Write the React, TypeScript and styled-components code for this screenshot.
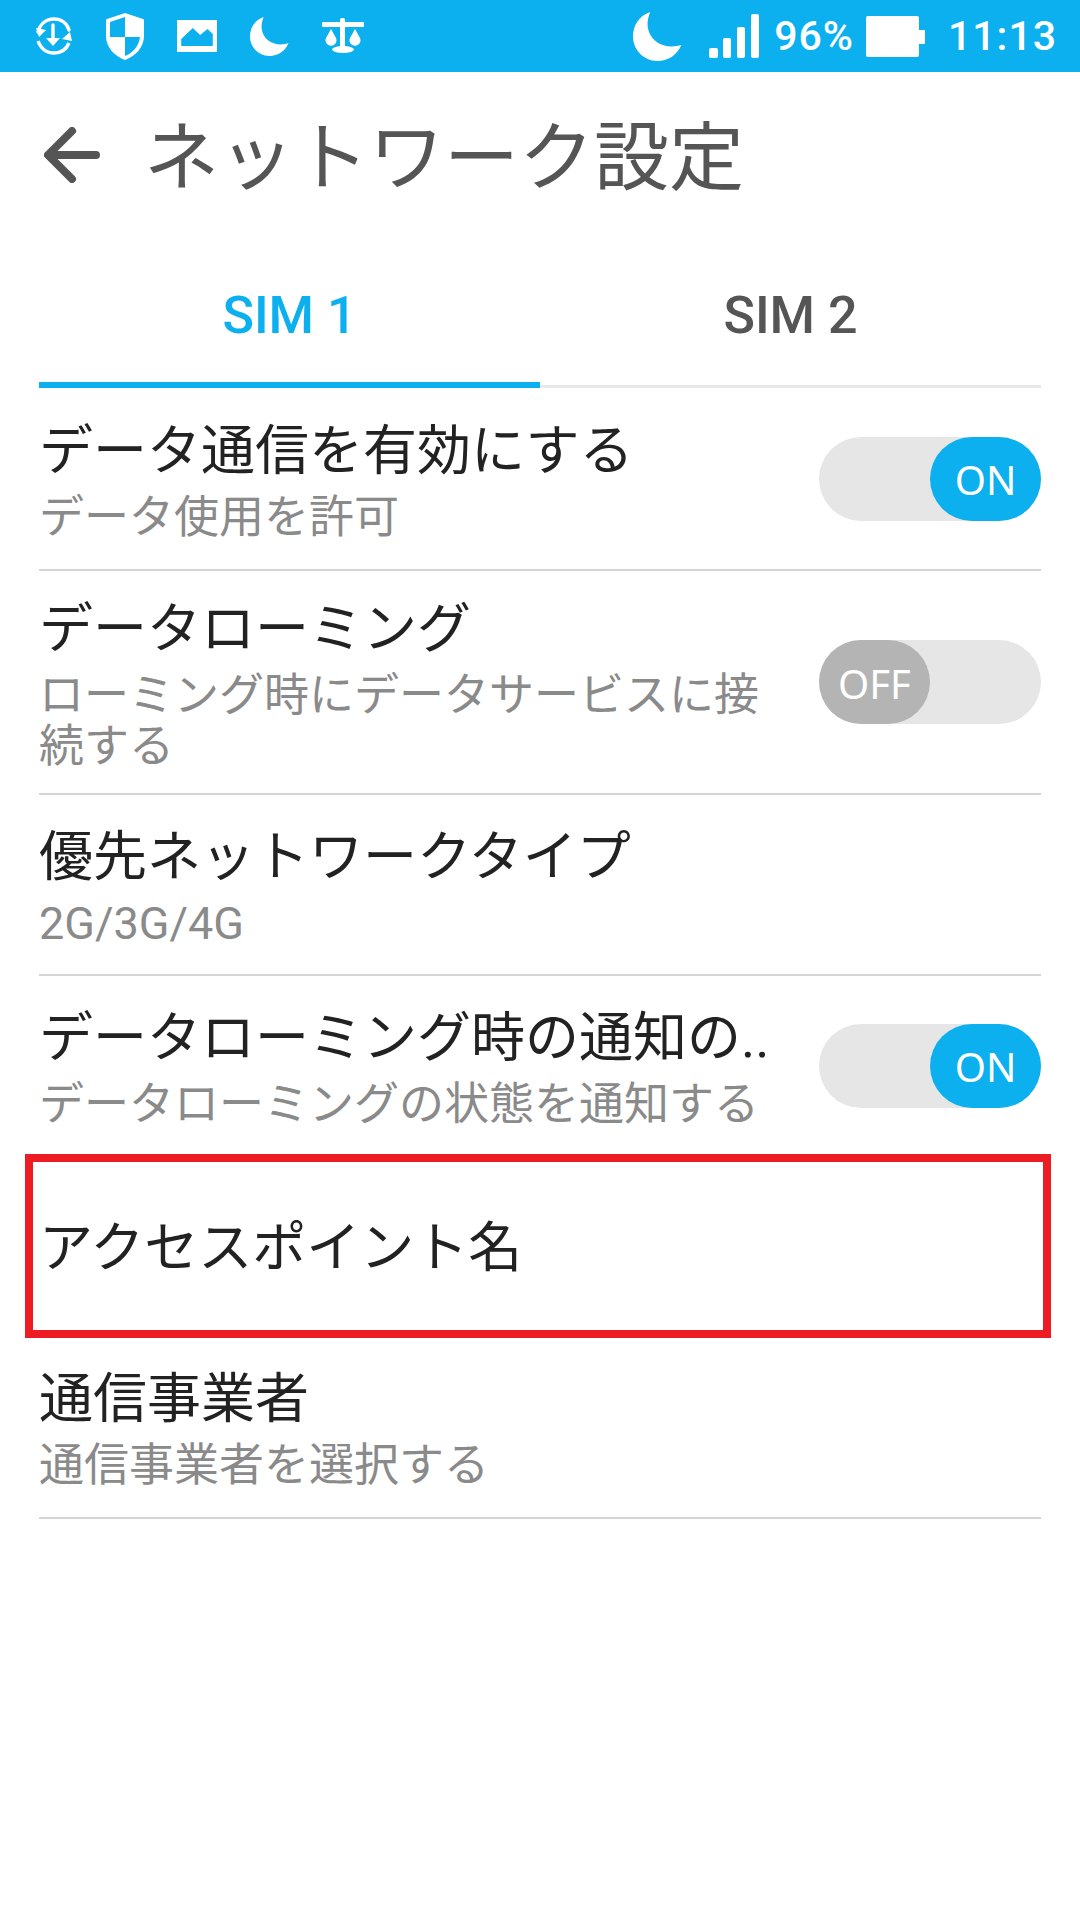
import React from "react";
import styled, { createGlobalStyle } from "styled-components";

const Global = createGlobalStyle`
  html, body { margin: 0; padding: 0; background: #fff; }
  body { width: 1080px; height: 1920px; overflow: hidden; font-family: "Roboto", "Noto Sans CJK JP", sans-serif; }
`;

const BLUE = "#0cb0ef";

const Page = styled.div`
  width: 1080px;
  height: 1920px;
  background: #fff;
`;
const StatusBar = styled.div`
  height: 72px;
  background: ${BLUE};
  display: flex;
  align-items: center;
  justify-content: space-between;
  padding: 0 23px 0 35px;
  box-sizing: border-box;
`;
const StatusGroup = styled.div`
  display: flex;
  align-items: center;
`;
const StatusIcons = styled(StatusGroup)`
  gap: 33px;
`;
const StatusText = styled.span<{ $gap: number }>`
  color: #fff;
  font-size: 41px;
  font-weight: 500;
  letter-spacing: 1px;
  margin-left: ${(p) => p.$gap}px;
`;
const Gap = styled.span<{ $gap: number }>`
  display: flex;
  margin-left: ${(p) => p.$gap}px;
`;
const Header = styled.div`
  height: 138px;
  display: flex;
  align-items: center;
  padding: 20px 0 0 44px;
  box-sizing: border-box;
`;
const BackIcon = styled.svg`
  margin-top: 8px;
`;
const Title = styled.h1`
  margin: 0 0 0 44px;
  font-size: 75px;
  font-weight: 400;
  color: #555;
  font-family: "Noto Sans CJK JP", sans-serif;
  line-height: 1;
`;
const Content = styled.div`
  padding: 0 39px;
`;
const Tabs = styled.div`
  display: flex;
  height: 178px;
  border-bottom: 3px solid #e8e8e8;
  box-sizing: border-box;
`;
const Tab = styled.div<{ $active?: boolean }>`
  flex: 1;
  display: flex;
  align-items: center;
  justify-content: center;
  font-size: 52px;
  font-weight: 500;
  padding-top: 38px;
  color: ${(p) => (p.$active ? BLUE : "#555")};
  border-bottom: 6px solid ${(p) => (p.$active ? BLUE : "transparent")};
  margin-bottom: -3px;
`;
const Row = styled.div<{ $height: number; $plain?: boolean }>`
  position: relative;
  height: ${(p) => p.$height}px;
  box-sizing: border-box;
  display: flex;
  align-items: center;
  justify-content: space-between;
  border-bottom: ${(p) => (p.$plain ? "none" : "2px solid #d4d4d4")};
`;
const RowText = styled.div`
  width: 745px;
  padding-top: 6px;
  font-family: "Roboto", "Noto Sans CJK JP", sans-serif;
`;
const RowTitle = styled.div`
  font-size: 54px;
  line-height: 62px;
  color: #222;
  white-space: nowrap;
`;
const RowSub = styled.div`
  font-size: 45px;
  line-height: 51px;
  color: #8a8a8a;
  margin-top: 9px;
`;
const Track = styled.div<{ $on: boolean }>`
  width: 222px;
  height: 84px;
  border-radius: 42px;
  background: #e6e6e6;
  display: flex;
  justify-content: ${(p) => (p.$on ? "flex-end" : "flex-start")};
`;
const Thumb = styled.div<{ $on: boolean }>`
  width: 111px;
  height: 84px;
  box-sizing: border-box;
  padding-top: 2px;
  border-radius: 42px;
  background: ${(p) => (p.$on ? BLUE : "#b4b4b4")};
  color: #fff;
  font-size: 40px;
  font-family: "Noto Sans", sans-serif;
  display: flex;
  align-items: center;
  justify-content: center;
`;
const Highlight = styled.div`
  position: absolute;
  left: -14px;
  right: -10px;
  top: -1px;
  bottom: -1px;
  border: 8px solid #ed1c24;
`;

const Toggle = ({ on }: { on: boolean }) => (
  <Track $on={on}>
    <Thumb $on={on}>{on ? "ON" : "OFF"}</Thumb>
  </Track>
);

const Moon = ({ size }: { size: number }) => (
  <svg width={size} height={size} viewBox="0 0 40 40">
    <path d="M14 0C5 3 0 11 0 20c0 11 9 20 20 20 9 0 16-5 19.500-13-14 4-26-3-27.500-15-.5-4 .5-8 2-12z" fill="#fff" />
  </svg>
);

export default function App() {
  return (
    <Page>
      <Global />
      <StatusBar>
        <StatusIcons>
          <svg width="38" height="38" viewBox="0 0 38 38" fill="none" stroke="#fff" strokeWidth="3.4">
            <path d="M3 15C5 7 11 2 19 2c7 0 13 4 15 11" strokeLinecap="round" />
            <path d="M3 24c3 8 9 12 16 12 6 0 12-3 15-10" />
            <path d="M18 8v15" strokeLinecap="round" />
            <path d="M11 21h14l-7 8z" fill="#fff" stroke="none" />
            <path d="M1 11l10 2-7 7zM37 24l-10-2 8-7z" fill="#fff" stroke="none" />
          </svg>
          <svg width="38" height="47" viewBox="0 0 38 47">
            <path fillRule="evenodd" fill="#fff" d="M19 0l18 6c1 0 1 1 1 2v15c0 11-8 20-19 24C8 43 0 34 0 23V8c0-1 0-2 1-2zM4 24h15V4L4 9zM19 24v19c8-3 14-10 15-19z" />
          </svg>
          <svg width="40" height="32" viewBox="0 0 38 32" preserveAspectRatio="none">
            <path fillRule="evenodd" fill="#fff" d="M0 0h38v32H0zM4 26h30V14l-5-5-7 6-7-7-11 11z" />
          </svg>
          <Moon size={39} />
          <svg width="42" height="36" viewBox="0 0 42 36" fill="#fff">
            <rect x="0" y="4" width="42" height="5" rx="1" />
            <rect x="18" y="0" width="5" height="30" rx="2" />
            <ellipse cx="21" cy="31.500" rx="11" ry="3.500" />
            <path d="M9 11l5 9a5.500 5.500 0 1 1-10 0zM33 11l5 9a5.500 5.500 0 1 1-10 0z" />
          </svg>
        </StatusIcons>
        <StatusGroup>
          <Moon size={49} />
          <Gap $gap={27}>
            <svg width="50" height="44" viewBox="0 0 50 44" fill="#fff">
              <rect x="0" y="34" width="9" height="10" rx="2" />
              <rect x="14" y="24" width="8" height="20" rx="2" />
              <rect x="28" y="13" width="8" height="31" rx="2" />
              <rect x="42" y="0" width="8" height="44" rx="2" />
            </svg>
          </Gap>
          <StatusText $gap={15}>96%</StatusText>
          <Gap $gap={12}>
            <svg width="59" height="41" viewBox="0 0 59 41" fill="#fff">
              <rect x="0" y="0" width="53" height="41" rx="2" />
              <rect x="51" y="14" width="8" height="14" rx="1" />
            </svg>
          </Gap>
          <StatusText $gap={23}>11:13</StatusText>
        </StatusGroup>
      </StatusBar>
      <Header>
        <BackIcon width="56" height="56" viewBox="0 0 56 56" fill="none" stroke="#555" strokeWidth="8" strokeLinecap="round" strokeLinejoin="round">
          <path d="M52 28H5M28 4L4 28l24 24" />
        </BackIcon>
        <Title>ネットワーク設定</Title>
      </Header>
      <Content>
        <Tabs>
          <Tab $active>SIM 1</Tab>
          <Tab>SIM 2</Tab>
        </Tabs>
        <Row $height={183}>
          <RowText>
            <RowTitle>データ通信を有効にする</RowTitle>
            <RowSub>データ使用を許可</RowSub>
          </RowText>
          <Toggle on />
        </Row>
        <Row $height={224}>
          <RowText>
            <RowTitle>データローミング</RowTitle>
            <RowSub>ローミング時にデータサービスに接続する</RowSub>
          </RowText>
          <Toggle on={false} />
        </Row>
        <Row $height={181}>
          <RowText>
            <RowTitle>優先ネットワークタイプ</RowTitle>
            <RowSub>2G/3G/4G</RowSub>
          </RowText>
        </Row>
        <Row $height={179} $plain>
          <RowText>
            <RowTitle>データローミング時の通知の..</RowTitle>
            <RowSub>データローミングの状態を通知する</RowSub>
          </RowText>
          <Toggle on />
        </Row>
        <Row $height={182} $plain>
          <RowText>
            <RowTitle>アクセスポイント名</RowTitle>
          </RowText>
          <Highlight />
        </Row>
        <Row $height={182}>
          <RowText>
            <RowTitle>通信事業者</RowTitle>
            <RowSub>通信事業者を選択する</RowSub>
          </RowText>
        </Row>
      </Content>
    </Page>
  );
}
